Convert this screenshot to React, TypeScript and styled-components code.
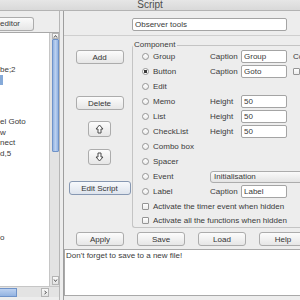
import React from 'react';
import styled, { createGlobalStyle } from 'styled-components';

const GlobalStyle = createGlobalStyle`
  html, body {
    margin: 0;
    padding: 0;
  }
  body {
    width: 300px;
    height: 300px;
    overflow: hidden;
    background: #ededed;
    font-family: "Liberation Sans", Arial, sans-serif;
    font-size: 8px;
    color: #3a3a3a;
  }
`;

const Window = styled.div`
  width: 300px;
  height: 300px;
  display: flex;
  flex-direction: column;
  overflow: hidden;
  background: #ededed;
`;

const TitleBar = styled.div`
  height: 10px;
  flex: none;
  display: flex;
  justify-content: center;
  align-items: flex-start;
  overflow: hidden;
  border-bottom: 1px solid #b3b3b3;
  background: linear-gradient(#e6e6e6, #d9d9d9);
  font-size: 10px;
  line-height: 10px;
  color: #4d4d4d;
`;

const Body = styled.div`
  flex: 1;
  display: flex;
  min-height: 0;
`;

const LeftPane = styled.div`
  width: 59px;
  flex: none;
  display: flex;
  flex-direction: column;
  padding: 6px 0 3px;
  border-right: 1px solid #b6b6b6;
  overflow: hidden;
`;

const EditorButton = styled.div`
  width: 34px;
  height: 14px;
  box-sizing: border-box;
  border: 1px solid #acacac;
  border-left: none;
  border-radius: 0 3px 3px 0;
  background: linear-gradient(#fbfbfb, #e6e6e6);
  line-height: 12px;
  white-space: nowrap;
  overflow: hidden;
`;

const ListBox = styled.div`
  flex: 1;
  display: flex;
  margin-top: 1px;
  border-top: 1px solid #a8a8a8;
  min-height: 0;
`;

const ListArea = styled.div`
  width: 49px;
  flex: none;
  background: #fff;
  overflow: hidden;
`;

const ListLine = styled.div`
  height: 10.5px;
  line-height: 10.5px;
  white-space: nowrap;
`;

const Selected = styled.span`
  display: inline-block;
  width: 3px;
  height: 10px;
  vertical-align: top;
  background: #86aad8;
`;

const VScroll = styled.div`
  width: 9px;
  flex: none;
  display: flex;
  flex-direction: column;
  border-left: 1px solid #c6c6c6;
  background: #e3e3e3;
  padding-bottom: 1px;
`;

const ArrowBox = styled.div<{ $h: number }>`
  height: ${p => p.$h}px;
  width: 7px;
  margin-left: 2px;
  flex: none;
  box-sizing: border-box;
  border: 1px solid #b4b4b4;
  background: linear-gradient(#fafafa, #e2e2e2);
  display: flex;
  align-items: center;
  justify-content: center;
`;

const VThumb = styled.div`
  height: 113px;
  width: 7px;
  margin-left: 2px;
  box-sizing: border-box;
  border: 1px solid #6f93c9;
  border-radius: 1px;
  background: linear-gradient(90deg, #93b3e1, #bcd1f0, #93b3e1);
`;

const Track = styled.div`
  flex: 1;
`;

const HScroll = styled.div`
  height: 11px;
  flex: none;
  display: flex;
  align-items: center;
  background: #e3e3e3;
  border-top: 1px solid #c6c6c6;
  box-sizing: border-box;
`;

const HThumb = styled.div`
  width: 17px;
  height: 9px;
  box-sizing: border-box;
  border: 1px solid #6f93c9;
  border-left: none;
  background: linear-gradient(#bcd1f0, #93b3e1);
`;

const HTrack = styled.div`
  width: 24px;
`;

const HArrow = styled.div`
  width: 8px;
  height: 9px;
  box-sizing: border-box;
  border: 1px solid #b4b4b4;
  background: linear-gradient(#fafafa, #e2e2e2);
  display: flex;
  align-items: center;
  justify-content: center;
`;

const Gap = styled.div`
  width: 3px;
  flex: none;
`;

const RightPane = styled.div`
  flex: 1;
  min-width: 0;
  display: flex;
  flex-direction: column;
  border-left: 1px solid #9e9e9e;
  overflow: hidden;
`;

const Header = styled.div`
  height: 25px;
  flex: none;
  box-sizing: border-box;
  padding: 7px 0 0 68px;
  border-bottom: 1px solid #cfcfcf;
`;

const Field = styled.input<{ $w: number }>`
  width: ${p => p.$w}px;
  height: 13px;
  box-sizing: border-box;
  margin: 0;
  padding: 0 2px;
  border: 1px solid #a4a4a4;
  border-radius: 2px;
  background: #fff;
  font: 8px "Liberation Sans", Arial, sans-serif;
  color: #3a3a3a;
  outline: none;
  flex: none;
`;

const Main = styled.div`
  height: 192px;
  flex: none;
  display: flex;
`;

const ToolColumn = styled.div`
  width: 68px;
  flex: none;
  box-sizing: border-box;
  padding: 14px 0 0 3px;
  display: flex;
  flex-direction: column;
  align-items: center;
`;

const Button = styled.button<{ $w?: number; $h?: number; $top?: number; $focus?: boolean }>`
  width: ${p => p.$w ?? 48}px;
  height: ${p => p.$h ?? 14}px;
  margin: ${p => p.$top ?? 0}px 0 0;
  padding: 0;
  flex: none;
  box-sizing: border-box;
  border: 1px solid ${p => (p.$focus ? '#8798b2' : '#acacac')};
  border-radius: 3px;
  background: ${p =>
    p.$focus ? 'linear-gradient(#f7f9fc, #dee4ed)' : 'linear-gradient(#fcfcfc, #e6e6e6)'};
  font: 8px "Liberation Sans", Arial, sans-serif;
  color: #333;
  display: flex;
  align-items: center;
  justify-content: center;
`;

const Group = styled.div`
  width: 180px;
  height: 183px;
  margin-top: 9px;
  flex: none;
  box-sizing: border-box;
  border: 1px solid #c4c4c4;
  border-right: none;
  border-radius: 3px 0 0 3px;
`;

const GroupTitle = styled.div`
  display: block;
  width: fit-content;
  height: 10px;
  margin: -6px 0 0 0;
  padding: 0 2px 0 1px;
  line-height: 10px;
  background: #ededed;
`;

const Options = styled.div`
  margin-top: -1px;
  padding-left: 9px;
`;

const OptionRow = styled.div`
  height: 15px;
  display: flex;
  align-items: center;
`;

const CheckRow = styled.div`
  height: 14px;
  display: flex;
  align-items: center;
`;

const Choice = styled.label`
  width: 68px;
  flex: none;
  display: flex;
  align-items: center;
  gap: 4px;
  white-space: nowrap;
`;

const Radio = styled.span<{ $on?: boolean }>`
  width: 7px;
  height: 7px;
  flex: none;
  box-sizing: border-box;
  border: 1px solid #959595;
  border-radius: 50%;
  background: ${p =>
    p.$on ? 'radial-gradient(circle, #3a3a3a 0 1.6px, #fff 2px)' : 'linear-gradient(#fff, #ececec)'};
`;

const Check = styled.span`
  width: 7px;
  height: 7px;
  flex: none;
  box-sizing: border-box;
  border: 1px solid #959595;
  border-radius: 1px;
  background: linear-gradient(#fff, #ececec);
`;

const CheckLabel = styled.label`
  display: flex;
  align-items: center;
  gap: 4px;
  white-space: nowrap;
`;

const FieldLabel = styled.span`
  width: 31px;
  flex: none;
`;

const Extra = styled.span`
  margin-left: 6px;
  display: flex;
  align-items: center;
  white-space: nowrap;
`;

const Dropdown = styled.div`
  width: 100px;
  height: 12px;
  flex: none;
  box-sizing: border-box;
  padding-left: 3px;
  border: 1px solid #acacac;
  border-radius: 3px;
  background: linear-gradient(#fafafa, #e4e4e4);
  line-height: 10px;
`;

const ButtonBar = styled.div`
  display: flex;
  gap: 13px;
  padding-left: 12px;
  margin-top: 4px;
  flex: none;
`;

const Message = styled.div`
  height: 47px;
  flex: none;
  margin-top: 3px;
  box-sizing: border-box;
  border: 1px solid #a9a9a9;
  border-right: none;
  background: #fff;
  padding: 1px 0 0 1px;
  line-height: 10px;
`;

const Caret = ({ dir }: { dir: 'up' | 'down' | 'right' }) => {
  const d = dir === 'up' ? 'M1 3.5 L2.5 1.5 L4 3.5' : dir === 'down' ? 'M1 1.5 L2.5 3.5 L4 1.5' : 'M1.5 1 L3.5 2.5 L1.5 4';
  return (
    <svg width="5" height="5" viewBox="0 0 5 5">
      <path d={d} fill="none" stroke="#555" strokeWidth="1" />
    </svg>
  );
};

const BigArrow = ({ down }: { down?: boolean }) => (
  <svg width="9" height="10" viewBox="0 0 9 10" style={down ? { transform: 'rotate(180deg)' } : undefined}>
    <path d="M4.5 1 L8 5 H6 V9 H3 V5 H1 Z" fill="#fafafa" stroke="#4a4a4a" strokeWidth="1" strokeLinejoin="round" />
  </svg>
);

const listLines: (string | null)[] = [
  '', '', '', 'be;2', null, '', '', '', 'el Goto', 'w', 'nect', 'd,5',
  '', '', '', '', '', '', '', 'o', '', '', '', '',
];

const App = () => {
  return (
    <>
      <GlobalStyle />
      <Window>
        <TitleBar>Script</TitleBar>
        <Body>
          <LeftPane>
            <EditorButton>editor</EditorButton>
            <ListBox>
              <ListArea>
                {listLines.map((l, i) => (
                  <ListLine key={i}>{l === null ? <Selected /> : l}</ListLine>
                ))}
              </ListArea>
              <VScroll>
                <ArrowBox $h={6}>
                  <Caret dir="up" />
                </ArrowBox>
                <VThumb />
                <Track />
                <ArrowBox $h={9}>
                  <Caret dir="down" />
                </ArrowBox>
              </VScroll>
            </ListBox>
            <HScroll>
              <HThumb />
              <HTrack />
              <HArrow>
                <Caret dir="right" />
              </HArrow>
            </HScroll>
          </LeftPane>
          <Gap />
          <RightPane>
            <Header>
              <Field $w={155} readOnly value="Observer tools" />
            </Header>
            <Main>
              <ToolColumn>
                <Button>Add</Button>
                <Button $top={32}>Delete</Button>
                <Button $w={23} $h={16} $top={11}>
                  <BigArrow />
                </Button>
                <Button $w={23} $h={16} $top={12}>
                  <BigArrow down />
                </Button>
                <Button $w={62} $top={16} $focus>
                  Edit Script
                </Button>
              </ToolColumn>
              <Group>
                <GroupTitle>Component</GroupTitle>
                <Options>
                  <OptionRow>
                    <Choice><Radio />Group</Choice>
                    <FieldLabel>Caption</FieldLabel>
                    <Field $w={46} readOnly value="Group" />
                    <Extra>Columns</Extra>
                  </OptionRow>
                  <OptionRow>
                    <Choice><Radio $on />Button</Choice>
                    <FieldLabel>Caption</FieldLabel>
                    <Field $w={46} readOnly value="Goto" />
                    <Extra><Check /></Extra>
                  </OptionRow>
                  <OptionRow>
                    <Choice><Radio />Edit</Choice>
                  </OptionRow>
                  <OptionRow>
                    <Choice><Radio />Memo</Choice>
                    <FieldLabel>Height</FieldLabel>
                    <Field $w={46} readOnly value="50" />
                  </OptionRow>
                  <OptionRow>
                    <Choice><Radio />List</Choice>
                    <FieldLabel>Height</FieldLabel>
                    <Field $w={46} readOnly value="50" />
                  </OptionRow>
                  <OptionRow>
                    <Choice><Radio />CheckList</Choice>
                    <FieldLabel>Height</FieldLabel>
                    <Field $w={46} readOnly value="50" />
                  </OptionRow>
                  <OptionRow>
                    <Choice><Radio />Combo box</Choice>
                  </OptionRow>
                  <OptionRow>
                    <Choice><Radio />Spacer</Choice>
                  </OptionRow>
                  <OptionRow>
                    <Choice><Radio />Event</Choice>
                    <Dropdown>Initialisation</Dropdown>
                  </OptionRow>
                  <OptionRow>
                    <Choice><Radio />Label</Choice>
                    <FieldLabel>Caption</FieldLabel>
                    <Field $w={46} readOnly value="Label" />
                  </OptionRow>
                  <CheckRow>
                    <CheckLabel><Check />Activate the timer event when hidden</CheckLabel>
                  </CheckRow>
                  <CheckRow>
                    <CheckLabel><Check />Activate all the functions when hidden</CheckLabel>
                  </CheckRow>
                </Options>
              </Group>
            </Main>
            <ButtonBar>
              <Button>Apply</Button>
              <Button>Save</Button>
              <Button>Load</Button>
              <Button>Help</Button>
            </ButtonBar>
            <Message>Don't forget to save to a new file!</Message>
          </RightPane>
        </Body>
      </Window>
    </>
  );
};

export default App;
